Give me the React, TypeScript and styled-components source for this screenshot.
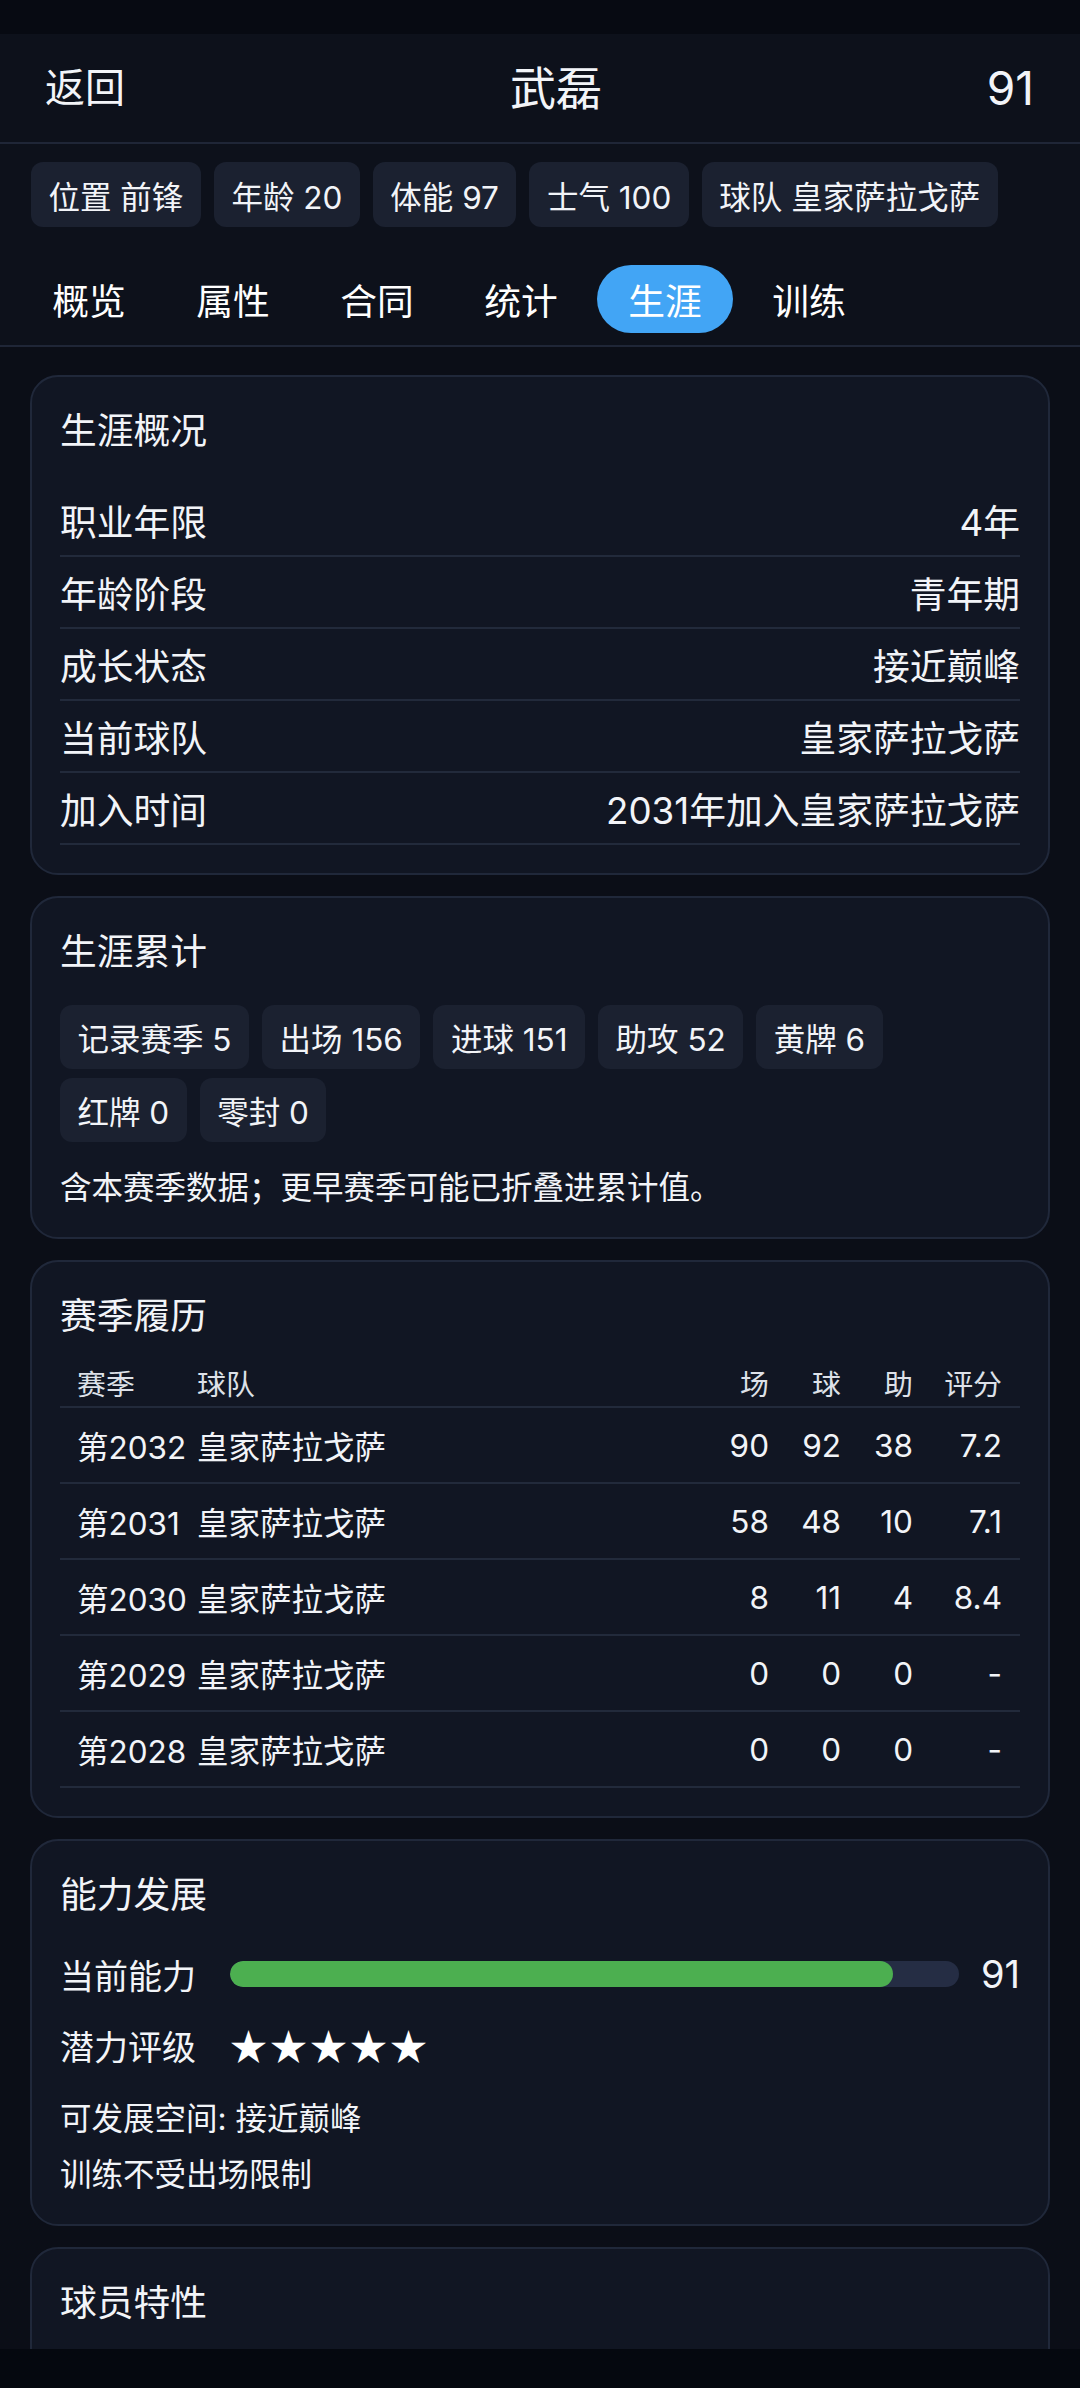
import React from "react";
import styled, { createGlobalStyle } from "styled-components";

const GlobalStyle = createGlobalStyle`
  html, body {
    margin: 0;
    padding: 0;
    background: #0b0e17;
  }
  body {
    font-family: Inter, "Noto Sans CJK SC", sans-serif;
    color: #f2f4f8;
  }
  * { box-sizing: border-box; }
`;

const Screen = styled.div`
  width: 1080px;
  height: 2388px;
  display: flex;
  flex-direction: column;
  overflow: hidden;
  background: #0b0e17;
`;

const StatusBar = styled.div`
  height: 34px;
  flex-shrink: 0;
  background: #070a12;
`;

const TopBar = styled.header`
  height: 110px;
  flex-shrink: 0;
  display: flex;
  align-items: center;
  justify-content: space-between;
  padding: 0 46px 0 45px;
  background: #0d111b;
  border-bottom: 2px solid #1f2637;
`;

const BackLabel = styled.span`
  font-size: 40px;
  line-height: 48px;
`;

const PlayerName = styled.h1`
  margin: 0;
  font-size: 46px;
  font-weight: 400;
  line-height: 56px;
`;

const Rating = styled.span`
  font-size: 46px;
  line-height: 56px;
`;

const NavArea = styled.div`
  flex-shrink: 0;
  background: #0d111b;
`;

const InfoChips = styled.div`
  display: flex;
  gap: 13px;
  padding: 18px 30px 0 31px;
`;

const Chip = styled.span<{ $h?: number }>`
  height: ${(p) => p.$h ?? 65}px;
  display: inline-flex;
  align-items: center;
  padding: 0 17.5px;
  border-radius: 12px;
  background: #1b2130;
  font-size: 31.5px;
  white-space: nowrap;
`;

const TabRow = styled.nav`
  display: flex;
  gap: 8px;
  padding: 38px 21px 12px;
  border-bottom: 2px solid #1f2637;
`;

const Tab = styled.span<{ $active?: boolean }>`
  height: 68px;
  display: inline-flex;
  align-items: center;
  padding: 0 31.25px;
  border-radius: 34px;
  font-size: 36.75px;
  background: ${(p) => (p.$active ? "#42a5f5" : "transparent")};
  color: #ffffff;
`;

const Content = styled.main`
  flex: 1;
  min-height: 0;
  overflow: hidden;
  display: flex;
  flex-direction: column;
  gap: 21px;
  padding: 28px 30px 0;
`;

const Card = styled.section<{ $minH?: number }>`
  flex-shrink: 0;
  min-height: ${(p) => p.$minH ?? 0}px;
  background: #111623;
  border: 2px solid #20283a;
  border-radius: 28px;
  padding: 30px 28px 28px;
`;

const CardTitle = styled.h2<{ $gap?: number }>`
  margin: 0 0 ${(p) => p.$gap ?? 0}px;
  font-size: 36.75px;
  font-weight: 400;
  line-height: 48px;
`;

const InfoRow = styled.div`
  height: 72px;
  display: flex;
  align-items: center;
  justify-content: space-between;
  border-bottom: 2px solid #222a3b;
  font-size: 36.75px;
`;

const ChipWrap = styled.div`
  display: flex;
  flex-wrap: wrap;
  gap: 9px 13px;
`;

const Note = styled.p<{ $top?: number }>`
  margin: ${(p) => p.$top ?? 0}px 0 0;
  font-size: 31.5px;
  line-height: 42px;
`;

const TableRow = styled.div<{ $head?: boolean }>`
  display: grid;
  grid-template-columns: 120px 1fr 73px 72px 72px 89px;
  align-items: center;
  height: ${(p) => (p.$head ? 50 : 76)}px;
  padding: 0 18px 0 17px;
  border-bottom: 2px solid #222a3b;
  font-size: ${(p) => (p.$head ? 28.9 : 31.5)}px;
  color: ${(p) => (p.$head ? "#dde1e8" : "#f2f4f8")};
  white-space: nowrap;
`;

const Table = styled.div`
  margin-top: 18px;
`;

const NumCell = styled.span`
  text-align: right;
`;

const MetricRow = styled.div<{ $top: number }>`
  height: 48px;
  margin-top: ${(p) => p.$top}px;
  display: flex;
  align-items: center;
  gap: 34px;
`;

const MetricLabel = styled.span`
  width: 136px;
  flex-shrink: 0;
  font-size: 34px;
  white-space: nowrap;
`;

const Track = styled.div`
  flex: 1;
  height: 26px;
  border-radius: 13px;
  background: #252d44;
  overflow: hidden;
  margin-right: -12px;
`;

const Fill = styled.div`
  height: 100%;
  border-radius: 13px;
  background: #4caf50;
`;

const MetricValue = styled.span`
  font-size: 38px;
`;

const Stars = styled.span`
  font-family: "Noto Sans CJK SC", sans-serif;
  font-size: 37px;
  letter-spacing: 3px;
  color: #ffffff;
  line-height: 48px;
`;

const SystemNav = styled.div`
  height: 39px;
  flex-shrink: 0;
  background: #05080f;
`;

const summary = [
  ["职业年限", "4年"],
  ["年龄阶段", "青年期"],
  ["成长状态", "接近巅峰"],
  ["当前球队", "皇家萨拉戈萨"],
  ["加入时间", "2031年加入皇家萨拉戈萨"],
];

const totals = ["记录赛季 5", "出场 156", "进球 151", "助攻 52", "黄牌 6", "红牌 0", "零封 0"];

const seasons = [
  ["第2032", "皇家萨拉戈萨", "90", "92", "38", "7.2"],
  ["第2031", "皇家萨拉戈萨", "58", "48", "10", "7.1"],
  ["第2030", "皇家萨拉戈萨", "8", "11", "4", "8.4"],
  ["第2029", "皇家萨拉戈萨", "0", "0", "0", "-"],
  ["第2028", "皇家萨拉戈萨", "0", "0", "0", "-"],
];

const tabs = ["概览", "属性", "合同", "统计", "生涯", "训练"];

export default function App() {
  const ability = 91;
  return (
    <>
      <GlobalStyle />
      <Screen>
        <StatusBar />
        <TopBar>
          <BackLabel>返回</BackLabel>
          <PlayerName>武磊</PlayerName>
          <Rating>91</Rating>
        </TopBar>
        <NavArea>
          <InfoChips>
            <Chip>位置 前锋</Chip>
            <Chip>年龄 20</Chip>
            <Chip>体能 97</Chip>
            <Chip>士气 100</Chip>
            <Chip>球队 皇家萨拉戈萨</Chip>
          </InfoChips>
          <TabRow>
            {tabs.map((t) => (
              <Tab key={t} $active={t === "生涯"}>
                {t}
              </Tab>
            ))}
          </TabRow>
        </NavArea>
        <Content>
          <Card>
            <CardTitle $gap={30}>生涯概况</CardTitle>
            {summary.map(([k, v]) => (
              <InfoRow key={k}>
                <span>{k}</span>
                <span>{v}</span>
              </InfoRow>
            ))}
          </Card>

          <Card>
            <CardTitle $gap={29}>生涯累计</CardTitle>
            <ChipWrap>
              {totals.map((t) => (
                <Chip key={t} $h={64}>
                  {t}
                </Chip>
              ))}
            </ChipWrap>
            <Note $top={25}>含本赛季数据；更早赛季可能已折叠进累计值。</Note>
          </Card>

          <Card>
            <CardTitle>赛季履历</CardTitle>
            <Table>
              <TableRow $head>
                <span>赛季</span>
                <span>球队</span>
                <NumCell>场</NumCell>
                <NumCell>球</NumCell>
                <NumCell>助</NumCell>
                <NumCell>评分</NumCell>
              </TableRow>
              {seasons.map((r) => (
                <TableRow key={r[0]}>
                  <span>{r[0]}</span>
                  <span>{r[1]}</span>
                  <NumCell>{r[2]}</NumCell>
                  <NumCell>{r[3]}</NumCell>
                  <NumCell>{r[4]}</NumCell>
                  <NumCell>{r[5]}</NumCell>
                </TableRow>
              ))}
            </Table>
          </Card>

          <Card>
            <CardTitle>能力发展</CardTitle>
            <MetricRow $top={31}>
              <MetricLabel>当前能力</MetricLabel>
              <Track>
                <Fill style={{ width: `${ability}%` }} />
              </Track>
              <MetricValue>{ability}</MetricValue>
            </MetricRow>
            <MetricRow $top={23}>
              <MetricLabel>潜力评级</MetricLabel>
              <Stars>★★★★★</Stars>
            </MetricRow>
            <Note $top={29}>可发展空间: 接近巅峰</Note>
            <Note $top={14}>训练不受出场限制</Note>
          </Card>

          <Card $minH={200}>
            <CardTitle>球员特性</CardTitle>
          </Card>
        </Content>
        <SystemNav />
      </Screen>
    </>
  );
}
